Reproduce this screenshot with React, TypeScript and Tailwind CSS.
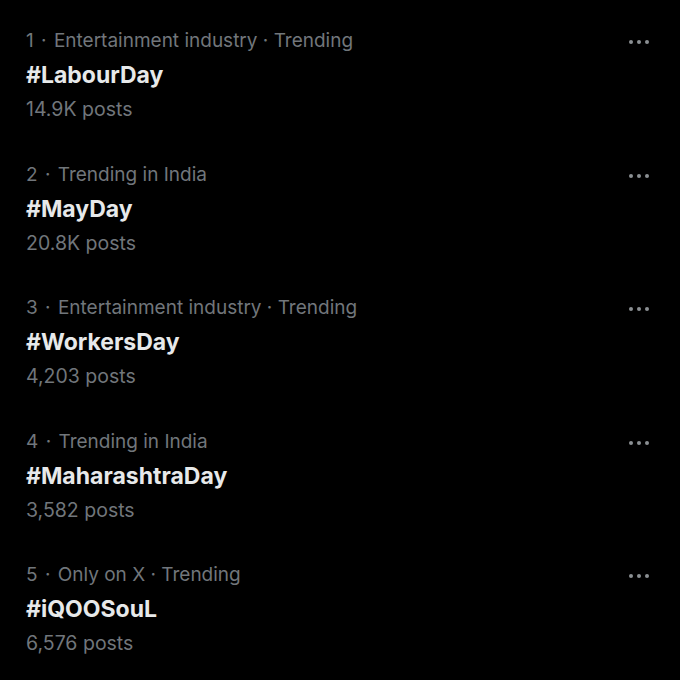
const trends = [
  { rank: 1, context: 'Entertainment industry · Trending', tag: '#LabourDay', posts: '14.9K posts' },
  { rank: 2, context: 'Trending in India', tag: '#MayDay', posts: '20.8K posts' },
  { rank: 3, context: 'Entertainment industry · Trending', tag: '#WorkersDay', posts: '4,203 posts' },
  { rank: 4, context: 'Trending in India', tag: '#MaharashtraDay', posts: '3,582 posts' },
  { rank: 5, context: 'Only on X · Trending', tag: '#iQOOSouL', posts: '6,576 posts' },
];

function MoreDots() {
  return (
    <div className="flex items-center gap-[4px] pt-[2px]">
      <span className="h-[4px] w-[4px] rounded-full bg-[#8b8f93]" />
      <span className="h-[4px] w-[4px] rounded-full bg-[#8b8f93]" />
      <span className="h-[4px] w-[4px] rounded-full bg-[#8b8f93]" />
    </div>
  );
}

export default function App() {
  return (
    <div
      className="h-[680px] w-[680px] overflow-hidden bg-black pt-[24px] pl-[26px] pr-[31px]"
      style={{ fontFamily: 'Inter, "Liberation Sans", sans-serif' }}
    >
      <div className="flex flex-col gap-[31.5px]">
        {trends.map(t => (
          <div key={t.rank} className="flex justify-between">
            <div className="flex flex-col leading-[34px]">
              <div className="text-[19px] text-[#71767b]">
                {t.rank} <span className="mx-[2px]">·</span> {t.context}
              </div>
              <div className="text-[23px] font-bold text-[#e7e9ea]">{t.tag}</div>
              <div className="text-[19.5px] text-[#71767b]">{t.posts}</div>
            </div>
            <div className="h-[34px] flex items-center">
              <MoreDots />
            </div>
          </div>
        ))}
      </div>
    </div>
  );
}
